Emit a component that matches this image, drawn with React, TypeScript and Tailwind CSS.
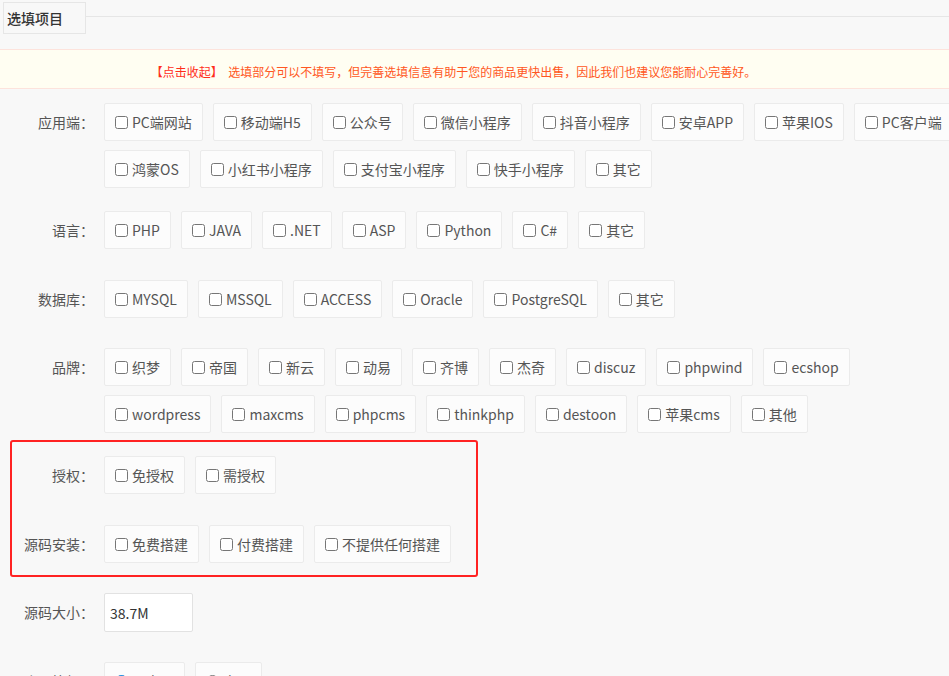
import React from "react";

const font = { fontFamily: '"Noto Sans CJK SC", "Noto Sans", sans-serif' };

const Chip = ({ text, type = "checkbox", checked = false, name }: { text: string; type?: string; checked?: boolean; name?: string }) => (
  <label className="flex items-center h-[38px] px-[10px] border border-[#ebebeb] rounded-[2px] bg-[#fcfcfc] text-[14px] text-[#555] whitespace-nowrap">
    <input
      type={type}
      name={name}
      defaultChecked={checked}
      className="w-[13px] h-[13px] mr-[4px] accent-[#1e9fff]"
    />
    {text}
  </label>
);

const Row = ({ label, className = "", children }: { label: string; className?: string; children: React.ReactNode }) => (
  <div className={"flex items-start " + className}>
    <div className="w-[94px] h-[38px] flex items-center justify-end text-[14px] text-[#555] shrink-0">
      {label}：
    </div>
    <div className="ml-[10px] flex flex-wrap gap-x-[10px] gap-y-[9px] flex-1">{children}</div>
  </div>
);

const groups = [
  {
    label: "应用端",
    mt: "mt-[14px]",
    items: ["PC端网站", "移动端H5", "公众号", "微信小程序", "抖音小程序", "安卓APP", "苹果IOS", "PC客户端", "鸿蒙OS", "小红书小程序", "支付宝小程序", "快手小程序", "其它"],
  },
  { label: "语言", mt: "mt-[23px]", items: ["PHP", "JAVA", ".NET", "ASP", "Python", "C#", "其它"] },
  { label: "数据库", mt: "mt-[31px]", items: ["MYSQL", "MSSQL", "ACCESS", "Oracle", "PostgreSQL", "其它"] },
  {
    label: "品牌",
    mt: "mt-[30px]",
    items: ["织梦", "帝国", "新云", "动易", "齐博", "杰奇", "discuz", "phpwind", "ecshop", "wordpress", "maxcms", "phpcms", "thinkphp", "destoon", "苹果cms", "其他"],
  },
];

export default function App() {
  return (
    <div className="h-screen w-full overflow-hidden bg-[#f8f8f8]" style={font}>
      <div className="w-[962px]">
        <div className="flex items-start">
          <div className="ml-[3px] mt-[2px] w-[83px] h-[32px] border border-[#e6e6e6] flex items-center pl-[3px] text-[14px] font-medium text-[#333]">
            选填项目
          </div>
          <div className="flex-1 mt-[16px] border-t border-[#e6e6e6]" />
        </div>

        <div className="mt-[15px] h-[40px] bg-[#fffef2] border-y border-[#fde3dc] pt-[12px] pr-[55px] text-center text-[12px] leading-[20px] text-[#ff5722]">
          <span className="text-[#ff2d1a]">【点击收起】</span>&nbsp; 选填部分可以不填写，但完善选填信息有助于您的商品更快出售，因此我们也建议您能耐心完善好。
        </div>

        {groups.map((g) => (
          <Row key={g.label} label={g.label} className={g.mt}>
            {g.items.map((t) => (
              <Chip key={t} text={t} />
            ))}
          </Row>
        ))}

        <div className="relative mt-[23px]">
          <div className="absolute -top-[16px] left-[10px] w-[468px] h-[137px] border-2 border-[#ff2222] rounded-[3px] pointer-events-none" />
          <Row label="授权">
            <Chip text="免授权" />
            <Chip text="需授权" />
          </Row>
          <Row label="源码安装" className="mt-[31px]">
            <Chip text="免费搭建" />
            <Chip text="付费搭建" />
            <Chip text="不提供任何搭建" />
          </Row>
        </div>

        <div className="flex items-start mt-[30px]">
          <div className="w-[94px] h-[39px] flex items-center justify-end text-[14px] text-[#555] shrink-0">源码大小：</div>
          <input
            defaultValue="38.7M"
            className="ml-[10px] w-[89px] h-[39px] px-[5px] bg-white border border-[#e2e2e2] rounded-[2px] text-[14px] text-[#333] outline-none"
          />
        </div>

        <Row label="会员等级" className="mt-[30px]">
          <Chip type="radio" name="vip" text="不启用" checked />
          <Chip type="radio" name="vip" text="启用" />
        </Row>
      </div>
    </div>
  );
}
